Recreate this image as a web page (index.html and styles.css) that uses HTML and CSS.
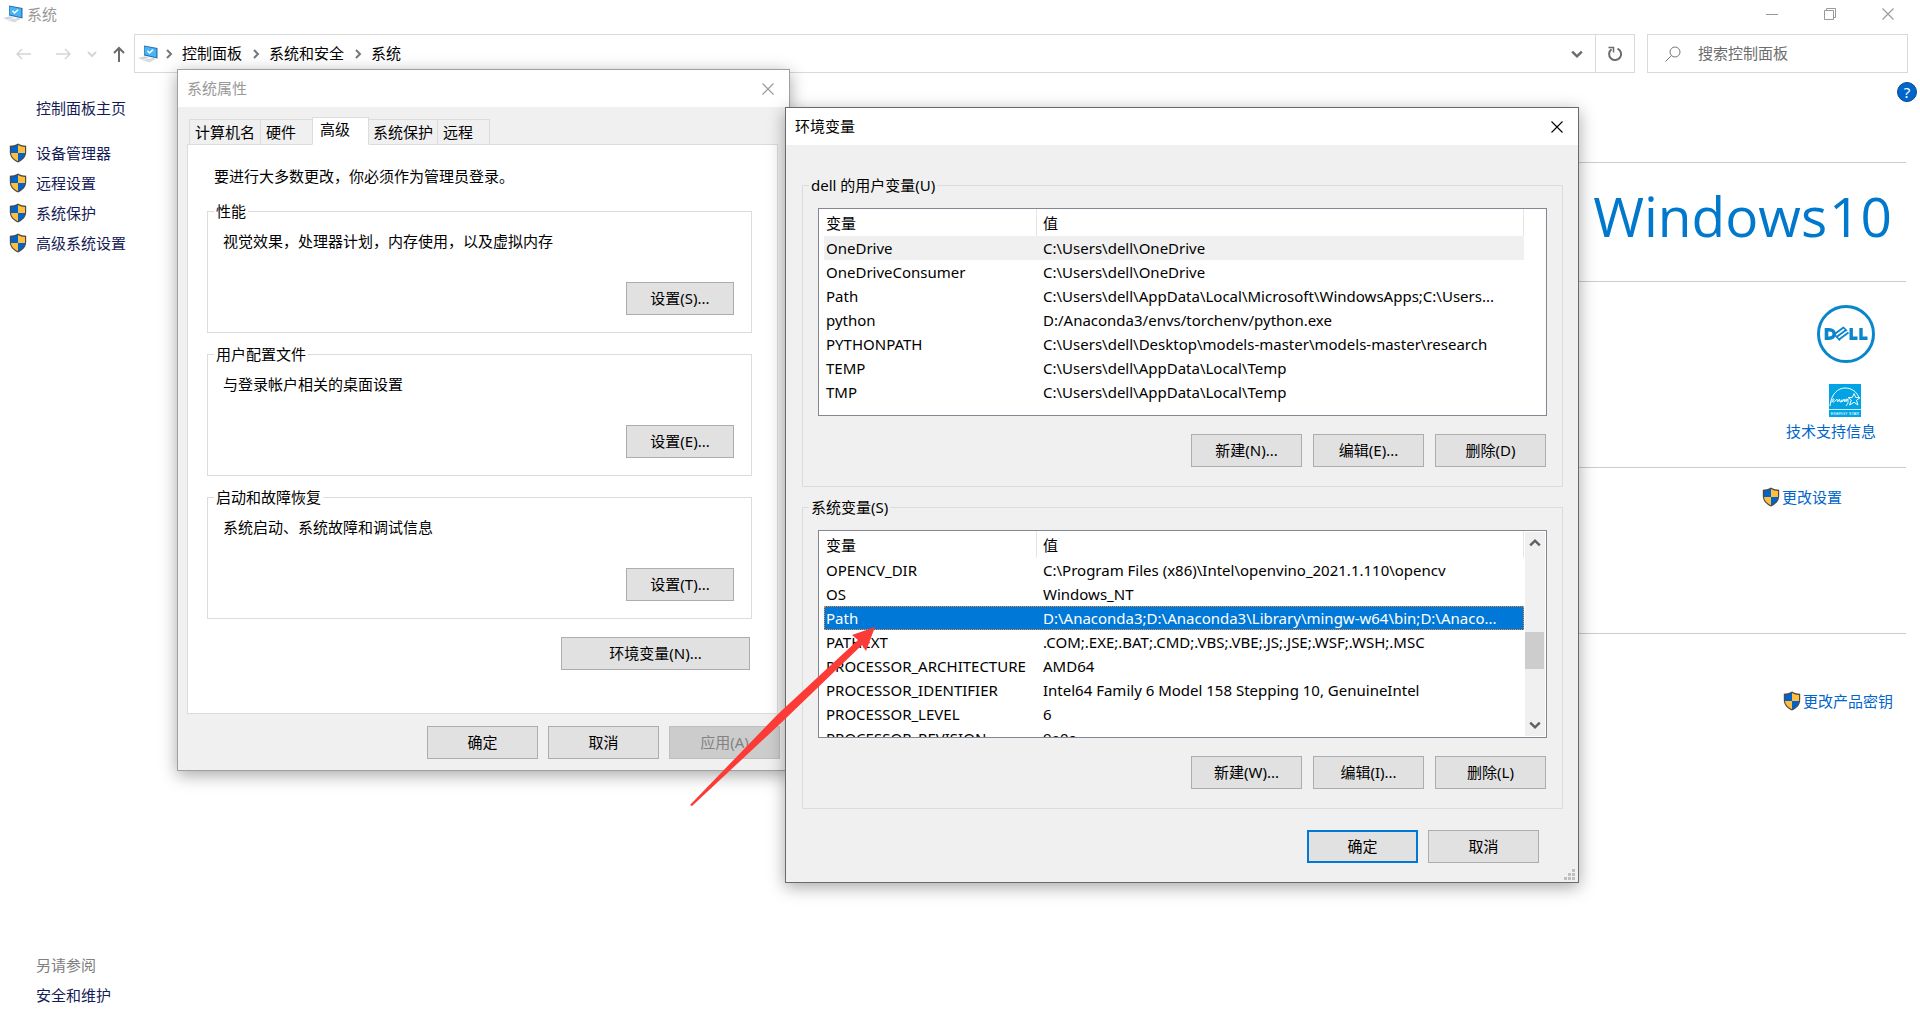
FILE: index.html
```html
<!DOCTYPE html>
<html lang="zh-CN">
<head>
<meta charset="utf-8">
<meta name="viewport" content="width=device-width, initial-scale=1">
<title>系统</title>
<link rel="stylesheet" href="styles.css">
</head>
<body>
<svg class="defs" aria-hidden="true">
  <symbol id="shield" viewBox="0 0 18 20">
    <path d="M9 0.5C6.500 2.200 3.500 2.700 0.800 2.700V9C0.800 14 4.500 17.500 9 19.500C13.500 17.500 17.200 14 17.200 9V2.700C14.500 2.700 11.500 2.200 9 0.500Z" fill="#4a4a48"/>
    <path d="M9 1.900V10H2V3.900C4.500 3.800 7 3.200 9 1.900Z" fill="#0063c9"/>
    <path d="M9 1.900V10H16V3.900C13.500 3.800 11 3.200 9 1.900Z" fill="#ffbe3c"/>
    <path d="M2 10H9V18.200C5.300 16.500 2.300 13.800 2 10Z" fill="#ffbe3c"/>
    <path d="M16 10H9V18.200C12.700 16.500 15.700 13.800 16 10Z" fill="#0063c9"/>
  </symbol>
  <symbol id="computer" viewBox="0 0 20 18">
    <path d="M6 0.500L19.500 3V13.500L6 10.500Z" fill="#2a6ca8"/>
    <path d="M6.500 1.500L18.300 3.800V12.200L6.500 9.500Z" fill="#46b4f5"/>
    <path d="M9.500 5.800L11.500 8L15 4.800" fill="none" stroke="#fff" stroke-width="1.500"/>
    <path d="M0 13L7 11.300L11 12.800L4.500 14.800Z" fill="#cfd5dc"/>
    <path d="M4.500 15.200L11 13.500L16 14.800L11.500 17.500Z" fill="#d6dbe1"/>
    <path d="M12 12.800L17 13.800L16 15Z" fill="#b9c2cc"/>
  </symbol>
  <symbol id="close" viewBox="0 0 12 12">
    <path d="M0.500 0.500L11.500 11.500M11.500 0.500L0.500 11.500" fill="none" stroke="currentColor" stroke-width="1.100"/>
  </symbol>
  <symbol id="chevron" viewBox="0 0 10 10">
    <path d="M1 3L5 7L9 3" fill="none" stroke="currentColor" stroke-width="2"/>
  </symbol>
</svg>

<header class="titlebar">
  <svg class="computer"><use href="#computer"/></svg>
  <h1 class="titlebar-text">系统</h1>
  <div class="window-buttons">
    <button type="button" aria-label="最小化"><svg width="12" height="12"><path d="M0 6.500H12" stroke="currentColor"/></svg></button>
    <button type="button" aria-label="还原"><svg width="12" height="12"><path d="M0.500 2.500H9.500V11.500H0.500ZM2.500 2.500V0.500H11.500V9.500H9.500" fill="none" stroke="currentColor"/></svg></button>
    <button type="button" aria-label="关闭"><svg width="12" height="12"><use href="#close"/></svg></button>
  </div>
</header>

<nav class="navbar">
  <div class="history">
    <button type="button" aria-label="后退" disabled><svg width="16" height="12"><path d="M15 6H1M6 1L1 6L6 11" fill="none" stroke="currentColor" stroke-width="1.500"/></svg></button>
    <button type="button" aria-label="前进" disabled><svg width="16" height="12"><path d="M1 6H15M10 1L15 6L10 11" fill="none" stroke="currentColor" stroke-width="1.500"/></svg></button>
    <button type="button" aria-label="最近" disabled><svg width="10" height="10"><use href="#chevron"/></svg></button>
    <button type="button" class="up" aria-label="向上"><svg width="12" height="16"><path d="M6 16V2M1 7L6 2L11 7" fill="none" stroke="currentColor" stroke-width="2"/></svg></button>
  </div>
  <div class="address">
    <svg class="computer"><use href="#computer"/></svg>
    <svg class="crumb-mark first" width="10" height="10"><use href="#chevron"/></svg>
    <a href="#">控制面板</a>
    <svg class="crumb-mark" width="10" height="10"><use href="#chevron"/></svg>
    <a href="#">系统和安全</a>
    <svg class="crumb-mark" width="10" height="10"><use href="#chevron"/></svg>
    <a href="#">系统</a>
    <button type="button" class="drop" aria-label="展开"><svg width="12" height="12"><use href="#chevron"/></svg></button>
    <button type="button" class="refresh" aria-label="刷新"><svg width="16" height="16"><path d="M10.500 2.600A6 6 0 1 1 4.500 3.300" fill="none" stroke="currentColor" stroke-width="2"/><path d="M1.500 1.500H6.500V6.500" fill="none" stroke="currentColor" stroke-width="1.500"/></svg></button>
  </div>
  <label class="search">
    <svg width="16" height="16"><circle cx="10" cy="6" r="5" fill="none" stroke="currentColor"/><path d="M6.500 9.500L0.500 15.500" stroke="currentColor"/></svg>
    <input type="search" placeholder="搜索控制面板" aria-label="搜索控制面板">
  </label>
</nav>

<div class="page">
  <aside class="sidebar">
    <div class="side-links">
      <a class="home" href="#">控制面板主页</a>
      <a href="#"><svg class="shield"><use href="#shield"/></svg>设备管理器</a>
      <a href="#"><svg class="shield"><use href="#shield"/></svg>远程设置</a>
      <a href="#"><svg class="shield"><use href="#shield"/></svg>系统保护</a>
      <a href="#"><svg class="shield"><use href="#shield"/></svg>高级系统设置</a>
    </div>
    <div class="see-also">
      <span>另请参阅</span>
      <a href="#">安全和维护</a>
    </div>
  </aside>
  <main class="content">
    <button type="button" class="help" aria-label="帮助">?</button>
    <section class="row brand"><span>Windows</span><span>10</span></section>
    <section class="row maker">
      <svg class="dell" viewBox="0 0 58 58" role="img" aria-label="DELL">
        <circle cx="29" cy="29" r="27.500" fill="none" stroke="#0a86cc" stroke-width="3"/>
        <g fill="none" stroke="#0a86cc">
          <path d="M9.500 24.800H12C19 24.800 19 33.200 12 33.200H9.500Z" stroke-width="3.600"/>
          <path d="M34.200 23V33.300H40.500M44 23V33.300H50.500" stroke-width="3.400"/>
          <path d="M17 29.500L26.500 22.500M19.500 32L29 25M22 34.500L31.500 27.500" stroke-width="1.900"/>
          <path d="M17 29L23 35.500M26 22L30 26" stroke-width="1.700"/>
        </g>
      </svg>
      <svg class="energy" viewBox="0 0 32 33" role="img" aria-label="ENERGY STAR">
        <rect width="32" height="33" fill="#00a4e4"/>
        <path d="M1 22C2 10 9 4 16 4C23 4 28 8 30 14" fill="none" stroke="#fff"/>
        <path d="M25 9.500L26.700 13.500L31 13.700L27.500 16.300L29 21L25 18.300L20.500 21L22.300 16L19 13.500L23.300 13.500Z" fill="#00a4e4" stroke="#fff"/>
        <path d="M2 18C5 18 6 14 4 15C2 16 4 20 6 17L8 15L8.500 18L10.500 15L11 18C14 18 14 15 12.500 16C11 18 14 19 15 15L15.500 18L17 15C19 14 18 19 16.500 17L19 15V19L17 22" fill="none" stroke="#fff" stroke-width="0.900"/>
        <path d="M0 25.500H32" stroke="#fff" stroke-width="0.800"/>
        <text x="16" y="31" text-anchor="middle" class="energy-text">ENERGY STAR</text>
      </svg>
      <a href="#">技术支持信息</a>
    </section>
    <section class="row rename"><a href="#"><svg class="shield"><use href="#shield"/></svg>更改设置</a></section>
    <section class="row activate"><a href="#"><svg class="shield"><use href="#shield"/></svg>更改产品密钥</a></section>
  </main>
</div>

<div class="dialog properties" role="dialog" aria-labelledby="properties-title">
  <div class="dialog-title">
    <h2 id="properties-title">系统属性</h2>
    <button type="button" class="dialog-close" aria-label="关闭"><svg width="12" height="12"><use href="#close"/></svg></button>
  </div>
  <div class="properties-body">
    <div class="tabs" role="tablist">
      <button type="button" role="tab">计算机名</button>
      <button type="button" role="tab">硬件</button>
      <button type="button" role="tab" class="active" aria-selected="true">高级</button>
      <button type="button" role="tab">系统保护</button>
      <button type="button" role="tab">远程</button>
    </div>
    <div class="panel" role="tabpanel">
      <p class="intro">要进行大多数更改，你必须作为管理员登录。</p>
      <fieldset class="setting">
        <legend>性能</legend>
        <p>视觉效果，处理器计划，内存使用，以及虚拟内存</p>
        <button type="button" class="btn">设置(S)...</button>
      </fieldset>
      <fieldset class="setting">
        <legend>用户配置文件</legend>
        <p>与登录帐户相关的桌面设置</p>
        <button type="button" class="btn">设置(E)...</button>
      </fieldset>
      <fieldset class="setting">
        <legend>启动和故障恢复</legend>
        <p>系统启动、系统故障和调试信息</p>
        <button type="button" class="btn">设置(T)...</button>
      </fieldset>
      <button type="button" class="btn env-btn">环境变量(N)...</button>
    </div>
    <div class="actions">
      <button type="button" class="btn">确定</button>
      <button type="button" class="btn">取消</button>
      <button type="button" class="btn" disabled>应用(A)</button>
    </div>
  </div>
</div>

<div class="dialog variables" role="dialog" aria-labelledby="variables-title">
  <div class="dialog-title">
    <h2 id="variables-title">环境变量</h2>
    <button type="button" class="dialog-close" aria-label="关闭"><svg width="12" height="12"><use href="#close"/></svg></button>
  </div>
  <div class="variables-body">
    <fieldset class="group">
      <legend>dell 的用户变量(U)</legend>
      <div class="list">
        <table>
          <thead><tr><th class="name">变量</th><th>值</th></tr></thead>
          <tbody>
            <tr class="inactive"><td>OneDrive</td><td>C:\Users\dell\OneDrive</td></tr>
            <tr><td>OneDriveConsumer</td><td>C:\Users\dell\OneDrive</td></tr>
            <tr><td>Path</td><td>C:\Users\dell\AppData\Local\Microsoft\WindowsApps;C:\Users...</td></tr>
            <tr><td>python</td><td>D:/Anaconda3/envs/torchenv/python.exe</td></tr>
            <tr><td>PYTHONPATH</td><td>C:\Users\dell\Desktop\models-master\models-master\research</td></tr>
            <tr><td>TEMP</td><td>C:\Users\dell\AppData\Local\Temp</td></tr>
            <tr><td>TMP</td><td>C:\Users\dell\AppData\Local\Temp</td></tr>
          </tbody>
        </table>
      </div>
      <div class="actions">
        <button type="button" class="btn">新建(N)...</button>
        <button type="button" class="btn">编辑(E)...</button>
        <button type="button" class="btn">删除(D)</button>
      </div>
    </fieldset>
    <fieldset class="group">
      <legend>系统变量(S)</legend>
      <div class="list">
        <table>
          <thead><tr><th class="name">变量</th><th>值</th></tr></thead>
          <tbody>
            <tr><td>OPENCV_DIR</td><td>C:\Program Files (x86)\Intel\openvino_2021.1.110\opencv</td></tr>
            <tr><td>OS</td><td>Windows_NT</td></tr>
            <tr class="selected"><td>Path</td><td>D:\Anaconda3;D:\Anaconda3\Library\mingw-w64\bin;D:\Anaco...</td></tr>
            <tr><td>PATHEXT</td><td>.COM;.EXE;.BAT;.CMD;.VBS;.VBE;.JS;.JSE;.WSF;.WSH;.MSC</td></tr>
            <tr><td>PROCESSOR_ARCHITECTURE</td><td>AMD64</td></tr>
            <tr><td>PROCESSOR_IDENTIFIER</td><td>Intel64 Family 6 Model 158 Stepping 10, GenuineIntel</td></tr>
            <tr><td>PROCESSOR_LEVEL</td><td>6</td></tr>
            <tr><td>PROCESSOR_REVISION</td><td>9e0a</td></tr>
          </tbody>
        </table>
        <div class="scrollbar">
          <svg class="scroll-up" width="12" height="12"><use href="#chevron"/></svg>
          <div class="track"><div class="thumb"></div></div>
          <svg width="12" height="12"><use href="#chevron"/></svg>
        </div>
      </div>
      <div class="actions">
        <button type="button" class="btn">新建(W)...</button>
        <button type="button" class="btn">编辑(I)...</button>
        <button type="button" class="btn">删除(L)</button>
      </div>
    </fieldset>
    <div class="actions confirm">
      <button type="button" class="btn default">确定</button>
      <button type="button" class="btn">取消</button>
    </div>
  </div>
  <svg class="grip" width="11" height="11"><path d="M8 0h3v3h-3zM4 4h3v3h-3zM8 4h3v3h-3zM0 8h3v3h-3zM4 8h3v3h-3zM8 8h3v3h-3z" fill="#bfbfbf"/></svg>
</div>

<svg class="pointer" viewBox="0 0 186 180" aria-hidden="true">
  <path d="M185 0L162 8L168 13L88 87L0 178L2 179L92 95L172 18L176 24Z" fill="#fc3a36"/>
</svg>
</body>
</html>
```

FILE: styles.css
```css
* { box-sizing: border-box; }

body {
  margin: 0;
  min-height: 100vh;
  display: flex;
  flex-direction: column;
  position: relative;
  background: #fff;
  color: #000;
  font: 15px/20px "Noto Sans", "Noto Sans CJK SC", sans-serif;
}

h1, h2, p { margin: 0; font-size: 15px; font-weight: 400; }
a { color: inherit; text-decoration: none; }
svg { display: block; flex: none; }
button { font: inherit; color: inherit; padding: 0; border: 0; background: none; }
.defs { position: absolute; width: 0; height: 0; }
.computer { width: 20px; height: 18px; }
.shield { width: 18px; height: 20px; }

/* main window frame */
.titlebar {
  display: flex;
  align-items: center;
  height: 28px;
  padding: 0 3px;
  gap: 4px;
  color: #999;
}
.window-buttons { margin-left: auto; display: flex; }
.window-buttons button { width: 58px; height: 28px; display: grid; place-items: center; }

.navbar { display: flex; padding: 6px 12px 0 16px; height: 45px; }
.history { width: 118px; display: flex; align-items: center; color: #6b6b6b; }
.history button { margin-right: 23px; }
.history button:nth-child(2), .history button:nth-child(3) { margin-right: 16px; }
.history button:disabled { color: #d5d5d5; }
.address, .search { border: 1px solid #d9d9d9; display: flex; align-items: center; }
.address { flex: 1; padding-left: 3px; }
.address a { padding-bottom: 2px; }
.crumb-mark { color: #777; transform: rotate(-90deg); margin: 0 8px 0 9px; }
.crumb-mark.first { margin-left: 6px; }
.drop { margin-left: auto; width: 36px; display: grid; place-items: center; color: #6b6b6b; }
.refresh { width: 39px; align-self: stretch; border-left: 1px solid #d9d9d9; display: grid; place-items: center; color: #6b6b6b; }
.search { width: 261px; margin-left: 12px; padding-left: 17px; gap: 17px; color: #777; }
.search input { flex: 1; min-width: 0; border: 0; outline: 0; padding: 0 0 2px; font: inherit; background: none; }
.search input::placeholder { color: #6d6d6d; opacity: 1; }

/* page */
.page { flex: 1; display: flex; }
.sidebar {
  width: 178px;
  padding: 20px 9px 20px;
  display: flex;
  flex-direction: column;
  justify-content: space-between;
  color: #151c55;
}
.side-links, .see-also { display: flex; flex-direction: column; }
.side-links a { height: 30px; display: flex; align-items: center; gap: 9px; }
.side-links .home { padding-left: 27px; margin-bottom: 15px; }
.see-also { padding-left: 27px; line-height: 30px; }
.see-also span { color: #808080; }

.content { flex: 1; padding: 9px 14px 0 22px; display: flex; flex-direction: column; }
.help {
  width: 20px;
  height: 20px;
  margin: 0 -11px 60px auto;
  border: 1px solid #0a4a8c;
  border-radius: 50%;
  background: #0066cc;
  color: #fff;
  line-height: 18px;
}
.row { border-top: 1px solid #ccc; display: flex; color: #0066cc; }
.row a { display: flex; align-items: center; gap: 2px; }
.brand {
  height: 119px;
  padding: 0 14px 12px 0;
  justify-content: flex-end;
  align-items: center;
  gap: 2px;
  color: #0078cc;
  font: 400 55px/80px "Open Sans", sans-serif;
}
.maker { height: 186px; padding: 23px 30px 0 0; flex-direction: column; align-items: flex-end; }
.dell { width: 58px; height: 58px; margin: 0 1px 21px 0; }
.energy { width: 32px; height: 33px; margin: 0 15px 4px 0; }
.energy-text { font: 4px "Liberation Sans", sans-serif; fill: #fff; }
.rename { height: 166px; padding: 19px 64px 0 0; justify-content: flex-end; align-items: flex-start; }
.activate { padding: 57px 13px 0 0; justify-content: flex-end; }

/* dialogs */
.dialog { position: absolute; background: #f0f0f0; border: 1px solid #a0a0a0; box-shadow: 0 4px 16px rgba(0, 0, 0, .35); }
.dialog-title { display: flex; align-items: center; height: 37px; padding: 0 15px 0 9px; background: #fff; }
.dialog-title h2 { padding-bottom: 2px; }
.dialog-close { margin-left: auto; }
.btn {
  width: 111px;
  height: 33px;
  padding-bottom: 2px;
  border: 1px solid #adadad;
  background: #e1e1e1;
}
.btn:disabled { color: #838383; background: #ccc; border-color: #bfbfbf; }
.btn.default { border: 2px solid #0078d7; }
.actions { display: flex; justify-content: flex-end; gap: 10px; }
fieldset { border: 1px solid #dcdcdc; margin: 0; padding: 0; min-width: 0; }
legend { height: 20px; margin-left: -9px; padding: 0 2px; }

.properties { left: 177px; top: 69px; width: 613px; }
.properties .dialog-title { color: #999; }
.properties-body { padding: 10px 9px 11px; }
.tabs { display: flex; align-items: flex-end; height: 28px; margin: 0 0 -1px 2px; }
.tabs button {
  height: 26px;
  padding: 0 5px;
  margin-right: -1px;
  border: 1px solid #dcdcdc;
  text-align: left;
}
.tabs button:nth-child(2), .tabs button:nth-child(5) { padding-right: 16px; }
.tabs .active { position: relative; height: 28px; padding: 0 18px 4px 7px; margin: 0; background: #fff; border-bottom-color: #fff; }
.tabs .active + button { padding: 0 4px; border-left: 0; }
.panel { margin-right: 2px; padding: 21px 25px 43px 19px; border: 1px solid #dcdcdc; background: #fff; }
.intro { padding-left: 7px; margin-bottom: 15px; }
.setting { padding: 10px 17px 17px 15px; margin-bottom: 11px; display: flex; flex-direction: column; }
.setting p { margin-bottom: 31px; }
.setting .btn { width: 108px; align-self: flex-end; }
.env-btn { display: block; width: 189px; margin: 18px 2px 0 auto; }
.properties-body > .actions { margin-top: 12px; }

.variables { left: 785px; top: 107px; width: 794px; border-color: #6a6a6a; }
.variables-body { padding: 30px 15px 19px 16px; }
.group { padding: 13px 15px 19px; margin-bottom: 10px; }
.group .actions { padding-right: 1px; gap: 11px; }
.list { height: 208px; border: 1px solid #828790; background: #fff; overflow: hidden; display: flex; padding-left: 5px; margin-bottom: 18px; }
table { width: 700px; flex: none; align-self: flex-start; border-collapse: separate; border-spacing: 0; table-layout: fixed; }
th { height: 27px; padding: 1px 6px 0; font-weight: 400; text-align: left; border-right: 1px solid #e5e5e5; }
th.name { width: 213px; padding-left: 2px; }
td { height: 24px; padding: 0 0 0 6px; white-space: nowrap; }
td:first-child { padding-left: 2px; }
.inactive { background: #f0f0f0; }
.selected { background: #0078d7; color: #fff; outline: 1px dotted #ff8728; outline-offset: -1px; }
.scrollbar { width: 20px; margin: 1px 0 1px 1px; padding: 5px 0; background: #f0f0f0; display: flex; flex-direction: column; align-items: center; color: #606060; }
.scroll-up { transform: rotate(180deg); }
.track { flex: 1; align-self: stretch; padding-top: 83px; }
.thumb { width: 19px; height: 37px; background: #cdcdcd; }
.confirm { margin-top: 21px; padding-right: 24px; }
.variables-body .group:nth-of-type(2) { margin-bottom: 0; }
.grip { position: absolute; right: 3px; bottom: 2px; }

/* annotation arrow laid over both dialogs */
.pointer { position: absolute; left: 690px; top: 627px; width: 186px; height: 180px; pointer-events: none; }
```
